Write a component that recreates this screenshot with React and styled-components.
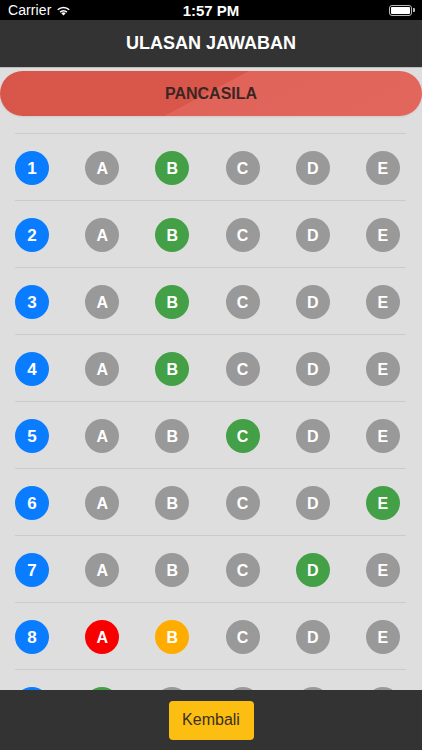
import styled, { createGlobalStyle } from 'styled-components'

const GlobalStyle = createGlobalStyle`
  html, body {
    margin: 0;
    padding: 0;
    background: #dedede;
    font-family: "Liberation Sans", Arial, sans-serif;
  }
  * { box-sizing: border-box; }
`

const COLORS = {
  blue: '#0a7cff',
  grey: '#999999',
  green: '#43a047',
  red: '#f90000',
  orange: '#ffac00',
}

// per question: which option gets a colour, the rest stay grey
const answers = [
  { B: 'green' },
  { B: 'green' },
  { B: 'green' },
  { B: 'green' },
  { C: 'green' },
  { E: 'green' },
  { D: 'green' },
  { A: 'red', B: 'orange' },
  { A: 'green' },
]

const letters = ['A', 'B', 'C', 'D', 'E']

function App() {
  return (
    <Page>
      <GlobalStyle />
      <StatusBar>
        <Carrier>
          Carrier
          <svg width="15" height="11" viewBox="0 0 15 11">
            <path d="M7.5 10.6 L5.3 8.3 A3.2 3.2 0 0 1 9.7 8.3 Z" fill="#fff" />
            <path d="M3.6 6.6 A5.6 5.6 0 0 1 11.4 6.6 L10.3 7.7 A4.1 4.1 0 0 0 4.7 7.7 Z" fill="#fff" />
            <path d="M1.2 4.2 A9 9 0 0 1 13.8 4.2 L12.7 5.3 A7.5 7.5 0 0 0 2.3 5.3 Z" fill="#fff" />
          </svg>
        </Carrier>
        <Clock>1:57 PM</Clock>
        <Battery>
          <BatteryBody>
            <BatteryFill />
          </BatteryBody>
          <BatteryTip />
        </Battery>
      </StatusBar>

      <NavBar>ULASAN JAWABAN</NavBar>

      <Content>
        <SubjectPill>PANCASILA</SubjectPill>
        <List>
          {answers.map((row, i) => (
            <Row key={i}>
              <Circle $color={COLORS.blue} $num>{i + 1}</Circle>
              {letters.map((l) => (
                <Circle key={l} $color={COLORS[row[l] || 'grey']}>{l}</Circle>
              ))}
            </Row>
          ))}
        </List>
      </Content>

      <BottomBar>
        <BackButton>Kembali</BackButton>
      </BottomBar>
    </Page>
  )
}

export default App

const Page = styled.div`
  width: 422px;
  height: 750px;
  display: flex;
  flex-direction: column;
  overflow: hidden;
  background: #dedede;
`

const StatusBar = styled.div`
  height: 20px;
  background: #000;
  color: #fff;
  display: flex;
  align-items: center;
  justify-content: space-between;
  padding: 0 7px 0 8px;
  position: relative;
  flex-shrink: 0;
`

const Carrier = styled.div`
  display: flex;
  align-items: center;
  gap: 5px;
  font-size: 14px;
  letter-spacing: 0.1px;
`

const Clock = styled.div`
  position: absolute;
  left: 0;
  right: 0;
  text-align: center;
  font-size: 15px;
  font-weight: bold;
  pointer-events: none;
`

const Battery = styled.div`
  display: flex;
  align-items: center;
`

const BatteryBody = styled.div`
  width: 23px;
  height: 11px;
  border: 1px solid #bbb;
  border-radius: 3px;
  padding: 1px;
`

const BatteryFill = styled.div`
  width: 100%;
  height: 100%;
  background: #fff;
  border-radius: 1px;
`

const BatteryTip = styled.div`
  width: 2px;
  height: 4px;
  background: #bbb;
  border-radius: 0 1px 1px 0;
  margin-left: 1px;
`

const NavBar = styled.div`
  height: 48px;
  background: #333333;
  color: #fff;
  display: flex;
  align-items: center;
  justify-content: center;
  font-size: 18px;
  font-weight: bold;
  flex-shrink: 0;
  border-bottom: 1px solid #bdbdbd;
`

const Content = styled.div`
  flex: 1;
  overflow: hidden;
  padding-top: 3px;
`

const SubjectPill = styled.div`
  height: 45px;
  border-radius: 23px;
  background: linear-gradient(152deg, #d8554a 0%, #d9564a 49%, #e1645a 49.3%, #e2665b 100%);
  color: #3c2623;
  font-size: 16px;
  font-weight: bold;
  display: flex;
  align-items: center;
  justify-content: center;
  box-shadow: 0 1px 2px rgba(0, 0, 0, 0.08);
`

const List = styled.div`
  margin: 17px 16px 0;
`

const Row = styled.div`
  height: 67px;
  border-top: 1px solid #cbcbcb;
  display: flex;
  align-items: center;
  gap: 36.2px;
  margin-left: -1px;
  padding-top: 1px;
`

const Circle = styled.div`
  width: 34px;
  height: 34px;
  border-radius: 50%;
  background: ${(p) => p.$color};
  color: #fff;
  font-weight: bold;
  font-size: ${(p) => (p.$num ? '17px' : '16px')};
  display: flex;
  align-items: center;
  justify-content: center;
  padding-top: 3px;
  flex-shrink: 0;
`

const BottomBar = styled.div`
  height: 60px;
  background: #333333;
  display: flex;
  align-items: center;
  justify-content: center;
  flex-shrink: 0;
`

const BackButton = styled.button`
  width: 85px;
  height: 39px;
  border: none;
  border-radius: 4px;
  background: #fcbe10;
  color: #3a3020;
  font-family: "Liberation Sans", Arial, sans-serif;
  font-size: 16px;
`
